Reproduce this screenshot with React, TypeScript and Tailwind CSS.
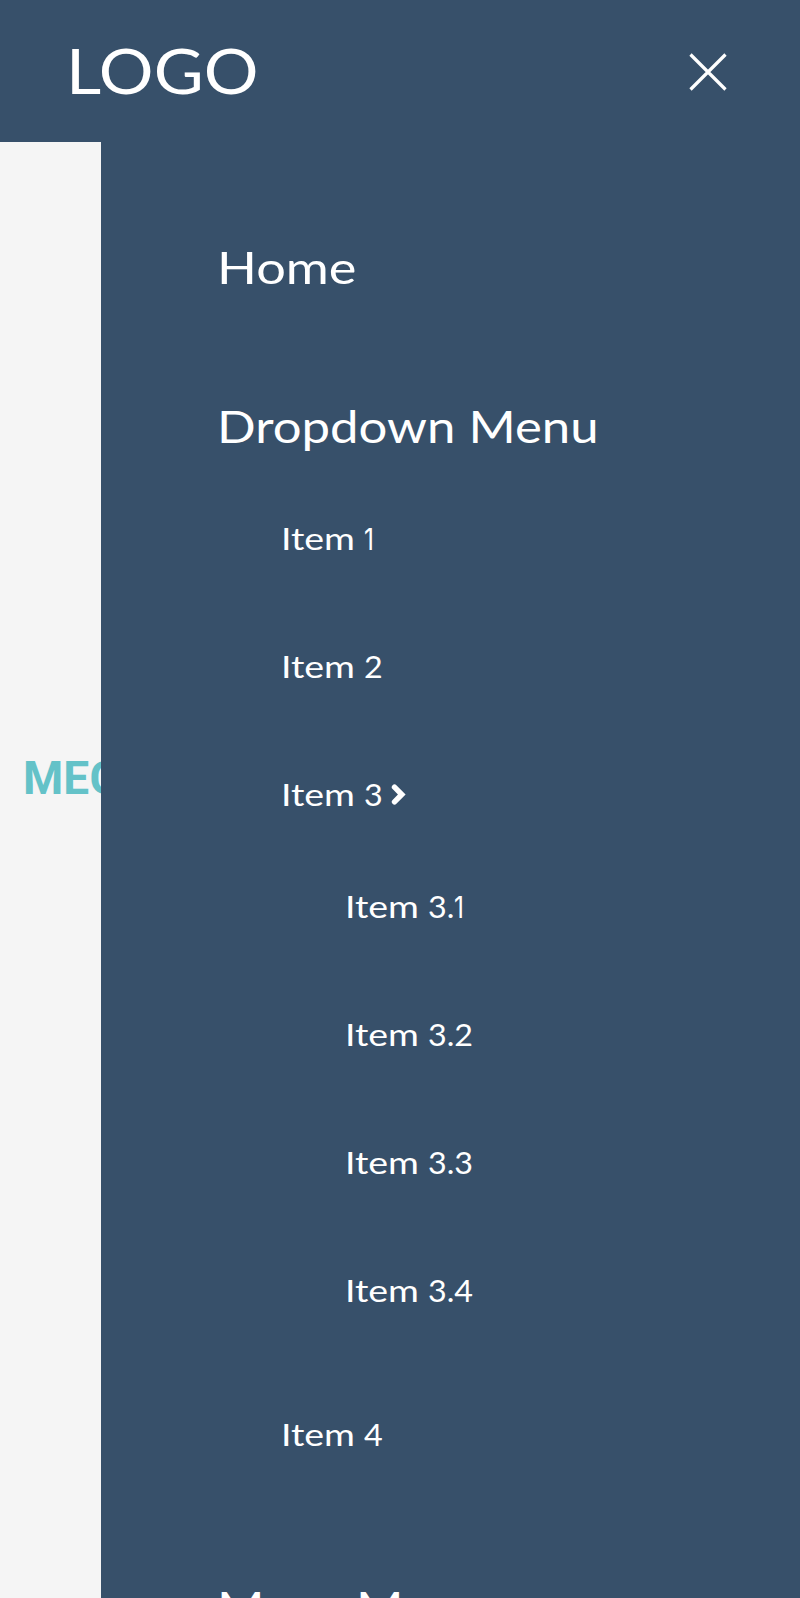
import React from "react";

function Item({ num, arrow = false }: { num: React.ReactNode; arrow?: boolean }) {
  return (
    <li className="flex h-32 items-center text-[31px] leading-none">
      <span className="w-[83px]">
        <span className="inline-block origin-left scale-x-[1.21]">Item</span>
      </span>
      <span className="inline-block origin-left scale-x-[1.04]">{num}</span>
      {arrow && (
        <svg className="ml-[9.5px] h-[21px] w-[15px]" viewBox="0 0 15 21" fill="none" stroke="currentColor" strokeWidth="5.4" strokeLinecap="round" strokeLinejoin="miter">
          <path d="M3.5 3.2 L10.8 10.5 L3.5 17.8" />
        </svg>
      )}
    </li>
  );
}

const One = () => <span className="inline-block origin-left scale-x-[0.78] font-['Inter',sans-serif] text-[30px] leading-none">1</span>;

export default function App() {
  return (
    <div className="flex h-[1598px] w-[800px] flex-col overflow-hidden bg-[#f5f5f5] font-['Lato',sans-serif] text-white">
      <header className="flex h-[142.4px] shrink-0 items-center justify-between bg-[#37506a] pr-[73px] pl-[65.5px]">
        <span className="mb-[2px] inline-block origin-left scale-x-[1.104] text-[62px] leading-none">LOGO</span>
        <svg className="mt-[2px] h-[38px] w-[38px]" viewBox="0 0 38 38" fill="none" stroke="currentColor" strokeWidth="3.2">
          <path d="M1.5 1.5 L36.5 36.5 M36.5 1.5 L1.5 36.5" />
        </svg>
      </header>
      <div className="flex min-h-0 flex-1">
        <main className="w-[101px] shrink-0 overflow-hidden pt-[612px] pl-[23px]">
          <h1 className="font-['Roboto',sans-serif] text-[46px] leading-[48px] font-bold whitespace-nowrap text-[#64c2c8]">MEGA</h1>
        </main>
        <nav className="-mt-px flex-1 bg-[#37506a] pt-[46px] pl-[115.5px]">
          <ul className="text-[44.5px] leading-none whitespace-nowrap">
            <li className="flex h-40 items-center">
              <span className="inline-block origin-left scale-x-[1.176]">Home</span>
            </li>
            <li>
              <div className="flex h-[159px] items-center">
                <span className="mb-px inline-block origin-left scale-x-[1.144]">Dropdown Menu</span>
              </div>
              <ul className="-mt-8 pl-16">
                <Item num={<One />} />
                <Item num="2" />
                <Item num="3" arrow />
                <li>
                  <ul className="-mt-4 mb-4 pl-16">
                    <Item num={<>3.<One /></>} />
                    <Item num="3.2" />
                    <Item num="3.3" />
                    <Item num="3.4" />
                  </ul>
                </li>
                <Item num="4" />
              </ul>
            </li>
            <li className="mt-[29px] flex h-40 items-center">
              <span className="inline-block origin-left scale-x-[1.15]">Mega Menu</span>
            </li>
          </ul>
        </nav>
      </div>
    </div>
  );
}
